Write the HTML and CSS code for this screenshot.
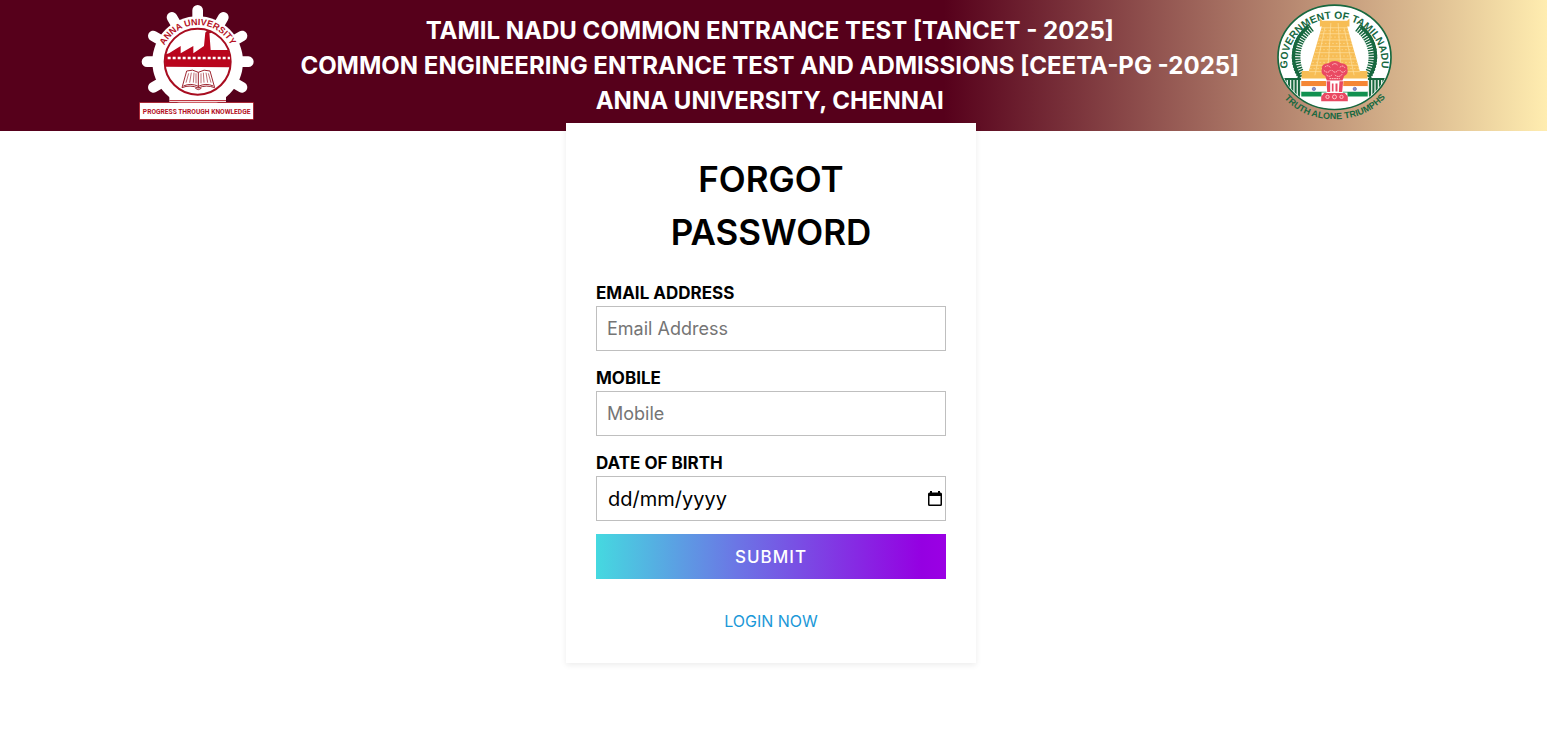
FILE: index.html
```html
<!DOCTYPE html>
<html lang="en">
<head>
<meta charset="utf-8">
<meta name="viewport" content="width=device-width, initial-scale=1">
<title>TANCET 2025 - Forgot Password</title>
<link rel="stylesheet" href="styles.css">
</head>
<body>
<header class="banner">
  <svg class="logo" viewBox="27 12 345 351" role="img" aria-label="Anna University">
    <defs>
      <path id="au-arc" d="M98 148A112 112 0 0 1 308 148"/>
      <clipPath id="au-clip"><circle cx="203" cy="185" r="98"/></clipPath>
    </defs>
    <g stroke="#fff" stroke-width="32" stroke-linecap="round">
      <path d="M203 185V31M203 185L280 52M203 185L336 108M203 185H355M203 185L336 262M203 185L126 52M203 185L70 108M203 185H51M203 185L70 262"/>
    </g>
    <circle cx="203" cy="185" r="136" fill="#fff"/>
    <path d="M118 290H288V306H118z" fill="#fff"/>
    <path d="M118 302H288" stroke="#b5121f" stroke-width="3"/>
    <circle cx="203" cy="185" r="99" fill="#fff" stroke="#a80d20" stroke-width="6"/>
    <g clip-path="url(#au-clip)">
      <path fill="#b9051d" d="M100 200V165L117 160L152 138V160L190 138V160L222 138L226 97H238L242 150H310V202z"/>
      <path d="M228 96q8-14 22-8q14-6 18 4q-8 6-18 3q-8 6-22 4z" fill="#a80d20"/>
      <path d="M113 174H300" stroke="#fff" stroke-width="7" stroke-dasharray="9 6"/>
    </g>
    <g fill="#fff" stroke="#9e2631" stroke-width="3">
      <path d="M170 213Q188 206 205 217Q222 206 240 213L254 263Q228 253 205 264Q180 253 156 263z"/>
      <path d="M205 217V264M160 258Q183 248 205 259Q228 248 250 258" fill="none"/>
      <path d="M176 220L168 248M184 218L179 248M192 218L190 248M198 220V250M213 220V250M220 218L222 248M228 218L233 248M235 220L243 248" stroke-width="2"/>
      <path d="M196 265q9 8 18 0" fill="none"/>
    </g>
    <text class="crest-name"><textPath href="#au-arc" startOffset="50%" text-anchor="middle">ANNA UNIVERSITY</textPath></text>
    <rect x="29" y="308" width="341" height="50" fill="#fff" stroke="#b5121f" stroke-width="2"/>
    <text class="crest-motto" x="200" y="341" text-anchor="middle">PROGRESS THROUGH KNOWLEDGE</text>
  </svg>

  <h1 class="banner-title">
    <span>TAMIL NADU COMMON ENTRANCE TEST [TANCET - 2025]</span>
    <span>COMMON ENGINEERING ENTRANCE TEST AND ADMISSIONS [CEETA-PG -2025]</span>
    <span>ANNA UNIVERSITY, CHENNAI</span>
  </h1>

  <svg class="logo" viewBox="29 12 346 351" role="img" aria-label="Government of Tamilnadu">
    <defs>
      <path id="tn-top" d="M65 222A142 132 0 1 1 339 222"/>
      <path id="tn-low" d="M48 292Q105 358 202 358Q299 358 358 290"/>
      <clipPath id="tn-clip"><ellipse cx="202" cy="172" rx="166" ry="153"/></clipPath>
    </defs>
    <ellipse cx="202" cy="172" rx="170" ry="157" fill="#fff" stroke="#17683f" stroke-width="5"/>
    <path d="M132 82A116 112 0 0 0 104 230" fill="none" stroke="#17683f" stroke-width="26" stroke-dasharray="5 3"/>
    <path d="M272 82A116 112 0 0 1 300 230" fill="none" stroke="#17683f" stroke-width="26" stroke-dasharray="5 3"/>
    <path d="M123 79A122 116 0 0 0 97 230M281 79A122 116 0 0 1 307 230" fill="none" stroke="#17683f" stroke-width="10"/>
    <g clip-path="url(#tn-clip)">
      <path d="M34 234H370V286H34z" fill="#e8f0e8"/>
      <path d="M34 237H102M302 237H370" stroke="#17683f" stroke-width="6"/>
      <path d="M45 238V290M55 238V295M65 238V305M75 238V310M85 238V310M95 238V310M309 238V310M319 238V310M329 238V310M339 238V300M349 238V295M359 238V290" stroke="#17683f" stroke-width="6"/>
      <path d="M102 234H302V330H102z" fill="#fff"/>
    </g>
    <path d="M158 55L165 62H240L247 55V79H240L278 213H301V236H103V213H125L164 79H158z" fill="#f7bd55"/>
    <g fill="none" stroke="#fde3a3" stroke-width="2">
      <path d="M163 83H241M158 101H246M153 120H251M147 139H257M142 158H263M137 177H268M131 196H274M125 215H279"/>
      <path stroke-dasharray="5 6" d="M162 92H243M157 111H249M151 130H255M146 149H260M140 168H266M135 187H271M128 206H276"/>
      <path d="M191 69L181 229M213 69L223 229M173 83L143 226M231 83L261 226"/>
    </g>
    <path d="M102 243H302V259H102z" fill="#f58634"/>
    <path d="M102 275H302V290H102z" fill="#119150"/>
    <path d="M102 259H302V275H102z" fill="#fff"/>
    <g fill="#8c91c9" stroke="#575fae" stroke-width="2"><circle cx="140" cy="267" r="5"/><circle cx="263" cy="267" r="5"/></g>
    <path d="M112 291H292Q265 317 202 322Q139 317 112 291z" fill="#fff"/>
    <path d="M176 241H229L227 278H241V305H163V278H178z" fill="#fff"/>
    <g fill="#e94862">
      <path d="M184 190Q202 176 222 190Q243 192 241 208Q245 222 231 228L226 242H179L174 228Q159 221 164 207Q161 192 184 190z"/>
      <path d="M178 244H189V276H180zM194 251H199V275H194zM205 251H211V275H205zM217 244H228L225 276H215zM171 279H233L242 290V304H162V290z"/>
    </g>
    <g fill="none" stroke="#ffc5c7" stroke-width="3">
      <path d="M173 201q9-8 16 1m6-7q8-8 16 0m7 7q9-8 15 1M170 211q12 12 20-1m4 0q9 13 20 0m4 0q8 13 18 1M178 225q10 9 18-2m7 2q12 10 22-2M187 236H218" stroke-dasharray="5 2"/>
      <circle cx="181" cy="291" r="5"/><circle cx="202" cy="291" r="6"/><circle cx="223" cy="291" r="5"/>
    </g>
    <text class="seal-name"><textPath href="#tn-top" startOffset="50%" text-anchor="middle">GOVERNMENT OF TAMILNADU</textPath></text>
    <text class="seal-motto"><textPath href="#tn-low" startOffset="50%" text-anchor="middle">TRUTH ALONE TRIUMPHS</textPath></text>
  </svg>
</header>

<main class="page">
  <form class="card">
    <h2 class="card-title">FORGOT<br>PASSWORD</h2>
    <div class="field">
      <label for="email">EMAIL ADDRESS</label>
      <input class="control" id="email" type="email" placeholder="Email Address">
    </div>
    <div class="field">
      <label for="mobile">MOBILE</label>
      <input class="control" id="mobile" type="tel" placeholder="Mobile">
    </div>
    <div class="field">
      <label for="dob">DATE OF BIRTH</label>
      <div class="control date">
        <input class="date-text" id="dob" type="text" inputmode="numeric" placeholder="dd/mm/yyyy">
        <button class="date-button" type="button" aria-label="Show date picker">
          <svg viewBox="0 0 14 15" width="14" height="15" aria-hidden="true"><path fill="#000" fill-rule="evenodd" d="M2 0H4V1.5H10V0H12V1.5H12.5Q14 1.5 14 3V13.5Q14 15 12.5 15H1.5Q0 15 0 13.5V3Q0 1.5 1.5 1.5H2zM1.5 5V13.5H12.5V5z"/></svg>
        </button>
      </div>
    </div>
    <button class="submit" type="submit">SUBMIT</button>
    <a class="login" href="#login">LOGIN NOW</a>
  </form>
</main>
</body>
</html>
```
FILE: styles.css
```css
* {
  box-sizing: border-box;
}

body {
  margin: 0;
  background: #fff;
  color: #000;
  font-family: Inter, "Open Sans", sans-serif;
}

.banner {
  display: grid;
  grid-template-columns: 115px 1fr 115px;
  padding: 4px 10% 10px 9%;
  background: linear-gradient(to right, #56001b 61%, #ffedb0);
}

.logo {
  display: block;
  width: 115px;
  height: 117px;
}

.crest-name {
  font: bold 27px "Liberation Sans", sans-serif;
  fill: #b5121f;
}

.crest-motto {
  font: bold 20px Roboto, "Liberation Sans", sans-serif;
  fill: #b5121f;
}

.seal-name {
  font: bold 31px "Liberation Sans", sans-serif;
  fill: #17683f;
}

.seal-motto {
  font: bold 27px "Liberation Sans", sans-serif;
  fill: #17683f;
}

.banner-title {
  margin: 0;
  padding: 9px 0 0 8px;
  color: #fff;
  font-size: 24px;
  font-weight: 700;
  line-height: 35px;
  text-align: center;
}

.banner-title span {
  display: block;
}

.page {
  display: flex;
  justify-content: center;
  padding: 0 5px 40px 0;
}

.card {
  display: flex;
  flex-direction: column;
  width: 410px;
  max-width: 100%;
  margin-top: -8px;
  padding: 30px;
  background: #fff;
  box-shadow: 0 2px 6px rgba(0, 0, 0, 0.08);
}

.card-title {
  margin: 0 0 22px;
  font-size: 35px;
  font-weight: 600;
  line-height: 53px;
  text-align: center;
}

.field {
  display: flex;
  flex-direction: column;
  margin-bottom: 15px;
}

.field label {
  font-size: 17px;
  font-weight: 700;
  line-height: 25px;
}

.control {
  width: 100%;
  height: 45px;
  padding: 0 10px;
  border: 1px solid #bfbfbf;
  border-radius: 0;
  background: #fff;
  font-family: inherit;
  font-size: 18px;
}

.control::placeholder {
  color: #757575;
}

.date {
  display: flex;
  align-items: center;
  padding: 0 3px 0 11px;
  font-size: 20px;
}

.date-text {
  flex: 1;
  min-width: 0;
  padding: 0;
  border: 0;
  background: none;
  font: inherit;
}

.date-text::placeholder {
  color: #000;
}

.date-button {
  display: flex;
  padding: 0;
  border: 0;
  background: none;
}

.submit {
  height: 45px;
  margin-top: -2px;
  border: 0;
  background: linear-gradient(to right, #45d9e0, #6b76e5 40%, #9500e2 93%, #9b00e4);
  color: #fff;
  font-family: inherit;
  font-size: 17px;
  font-weight: 500;
  letter-spacing: 1px;
}

.login {
  align-self: center;
  margin-top: 30px;
  color: #1b98d8;
  font-size: 16px;
  line-height: 24px;
  text-decoration: none;
}
```
